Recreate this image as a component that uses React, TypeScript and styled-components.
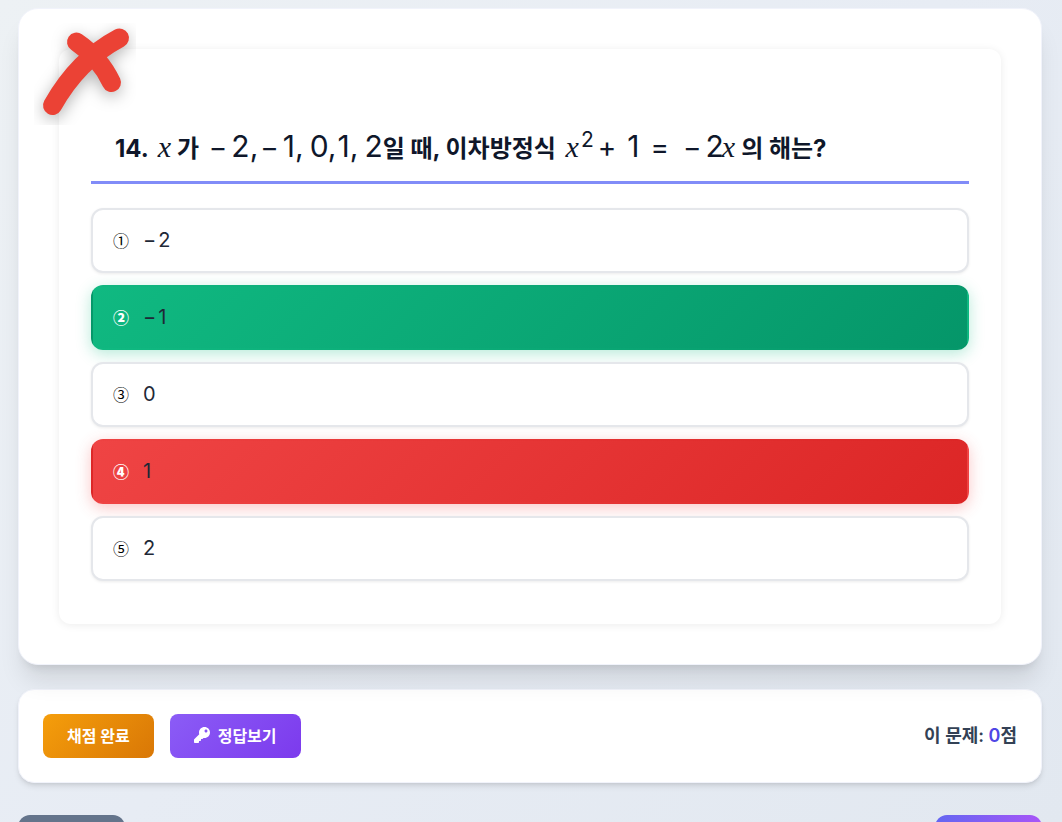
import React from "react";
import styled, { createGlobalStyle, css } from "styled-components";
import { FaKey } from "react-icons/fa";

const GlobalStyle = createGlobalStyle`
  *, *::before, *::after { box-sizing: border-box; }
  html, body { margin: 0; }
  body {
    font-family: Inter, "Noto Sans CJK KR", sans-serif;
    color: #1e293b;
  }
  button { font: inherit; cursor: pointer; }
`;

const Page = styled.main`
  height: 100vh;
  overflow: hidden;
  padding: 8px 20px 0 18px;
  background: linear-gradient(135deg, #edf1f4 0%, #e7ecf4 50%, #e2e8f0 100%);
`;

const QuizCard = styled.section`
  position: relative;
  padding: 40px;
  border: 1px solid #f1f3fb;
  border-radius: 20px;
  background: #ffffff;
  box-shadow: 0 20px 25px -5px rgba(0, 0, 0, 0.1), 0 8px 10px -6px rgba(0, 0, 0, 0.1);
`;

const WrongMark = styled.svg`
  position: absolute;
  top: 14px;
  left: 15px;
  width: 102px;
  height: 102px;
  overflow: hidden;
`;

const QuestionPanel = styled.div`
  padding: 62px 32px 43px;
  border-radius: 12px;
  box-shadow: 0 1px 8px rgba(0, 0, 0, 0.08);
`;

const Question = styled.h1`
  display: flex;
  align-items: baseline;
  height: 73px;
  margin: 0 0 24px;
  padding: 11px 24px 0;
  border-bottom: 3px solid #818cf8;
  color: #0f172a;
  font-size: 24px;
  font-weight: 700;
  line-height: 48px;
  white-space: pre;
`;

const MathRun = styled.span`
  display: inline-flex;
  align-items: baseline;
  font-size: 30px;
  font-weight: 400;
`;

const Variable = styled.i`
  margin: 0 6px 0 4px;
  font-family: "Liberation Serif", serif;
  font-size: 30px;
  font-weight: 400;
`;

const operatorMargins = {
  sign: "0 4px",
  binary: "0 11px 0 4px",
  relation: "0 10px 0 11px",
};

const Operator = styled.span<{ $kind: keyof typeof operatorMargins }>`
  margin: ${(p) => operatorMargins[p.$kind]};
  font-size: 28px;
`;

const Term = styled.span<{ $gap?: number }>`
  margin-right: ${(p) => p.$gap ?? 0}px;
`;

const Power = styled.sup`
  align-self: flex-start;
  margin-left: -4px;
  font-size: 21px;
  line-height: 36px;
  vertical-align: baseline;
`;

const Choices = styled.div`
  display: flex;
  flex-direction: column;
  gap: 12px;
`;

type Mark = "none" | "correct" | "wrong";

const markStyles = {
  none: css`
    border-color: #e5e7eb;
    background: #ffffff;
    color: #000000;
    box-shadow: 0 1px 3px rgba(0, 0, 0, 0.08);
  `,
  correct: css`
    border-color: transparent;
    background: linear-gradient(135deg, #10b981, #059669);
    color: #ffffff;
    font-weight: 900;
    box-shadow: 0 4px 15px rgba(16, 185, 129, 0.3);
  `,
  wrong: css`
    border-color: transparent;
    background: linear-gradient(135deg, #ef4444, #dc2626);
    color: #ffffff;
    font-weight: 900;
    box-shadow: 0 4px 15px rgba(239, 68, 68, 0.3);
  `,
};

const Choice = styled.button<{ $mark: Mark }>`
  display: flex;
  align-items: center;
  gap: 14px;
  height: 65px;
  padding: 0 20px 2px;
  border: 2px solid;
  border-radius: 12px;
  text-align: left;
  ${(p) => markStyles[p.$mark]}
`;

const ChoiceNumber = styled.span`
  font-family: "Noto Sans CJK KR", sans-serif;
  font-size: 16px;
`;

const ChoiceValue = styled.span`
  display: inline-flex;
  gap: 2px;
  color: #1f2937;
  font-size: 20px;
  font-weight: 400;
`;

const ActionBar = styled.section`
  display: flex;
  align-items: center;
  gap: 16px;
  margin-top: 24px;
  padding: 24px;
  border: 1px solid #f1f3fb;
  border-radius: 16px;
  background: #ffffff;
  box-shadow: 0 4px 6px -1px rgba(0, 0, 0, 0.1), 0 2px 4px -2px rgba(0, 0, 0, 0.1);
`;

const ActionButton = styled.button<{ $from: string; $to: string }>`
  display: inline-flex;
  align-items: center;
  gap: 8px;
  height: 44px;
  padding: 0 24px 2px;
  border: 0;
  border-radius: 8px;
  background: linear-gradient(135deg, ${(p) => p.$from}, ${(p) => p.$to});
  color: #ffffff;
  font-size: 16px;
  font-weight: 700;
`;

const Score = styled.p`
  margin: 0 0 0 auto;
  padding-bottom: 4px;
  color: #334155;
  font-size: 18px;
  font-weight: 600;

  strong {
    color: #4f46e5;
    font-weight: 600;
  }
`;

const Pager = styled.nav`
  display: flex;
  justify-content: space-between;
  margin-top: 32px;
`;

const PagerButton = styled.button<{ $fill: string }>`
  width: 107px;
  height: 48px;
  border: 0;
  border-radius: 12px;
  background: ${(p) => p.$fill};
`;

const choices: { number: string; negative?: boolean; value: string; mark: Mark }[] = [
  { number: "①", negative: true, value: "2", mark: "none" },
  { number: "②", negative: true, value: "1", mark: "correct" },
  { number: "③", value: "0", mark: "none" },
  { number: "④", value: "1", mark: "wrong" },
  { number: "⑤", value: "2", mark: "none" },
];

export default function App() {
  return (
    <>
      <GlobalStyle />
      <Page>
        <QuizCard>
          <QuestionPanel>
            <Question>
              <span>14. </span>
              <Variable>x</Variable>
              <span>가 </span>
              <MathRun>
                <Operator $kind="sign">−</Operator>
                <Term $gap={-2}>2,</Term>
                <Operator $kind="sign">−</Operator>
                <Term $gap={6}>1,</Term>
                <Term $gap={1}>0,</Term>
                <Term $gap={6}>1,</Term>
                <Term>2</Term>
              </MathRun>
              <span>일 때, 이차방정식 </span>
              <MathRun>
                <Variable>x</Variable>
                <Power>2</Power>
                <Operator $kind="binary">+</Operator>
                <Term>1</Term>
                <Operator $kind="relation">=</Operator>
                <Operator $kind="sign">−</Operator>
                <Term $gap={-6}>2</Term>
                <Variable>x</Variable>
              </MathRun>
              <span>의 해는?</span>
            </Question>
            <Choices>
              {choices.map((choice) => (
                <Choice key={choice.number} type="button" $mark={choice.mark}>
                  <ChoiceNumber>{choice.number}</ChoiceNumber>
                  <ChoiceValue>
                    {choice.negative && <span>−</span>}
                    <span>{choice.value}</span>
                  </ChoiceValue>
                </Choice>
              ))}
            </Choices>
          </QuestionPanel>
          <WrongMark viewBox="34 23 102 102" role="img" aria-label="오답">
            <g
              fill="none"
              stroke="#eb4235"
              strokeWidth="19"
              strokeLinecap="round"
              style={{ filter: "drop-shadow(0 4px 8px rgba(0,0,0,0.3))" }}
            >
              <path d="M119.5 38Q78 60 52.5 105.5M76.5 42Q100 58 111.5 82.5" />
            </g>
          </WrongMark>
        </QuizCard>

        <ActionBar>
          <ActionButton type="button" $from="#f59e0b" $to="#d97706">
            채점 완료
          </ActionButton>
          <ActionButton type="button" $from="#8b5cf6" $to="#7c3aed">
            <FaKey size={16} aria-hidden />
            정답보기
          </ActionButton>
          <Score>
            이 문제: <strong>0</strong>점
          </Score>
        </ActionBar>

        <Pager>
          <PagerButton type="button" aria-label="이전" $fill="#64748b" />
          <PagerButton
            type="button"
            aria-label="다음"
            $fill="linear-gradient(90deg, #6366f1, #a855f7)"
          />
        </Pager>
      </Page>
    </>
  );
}
